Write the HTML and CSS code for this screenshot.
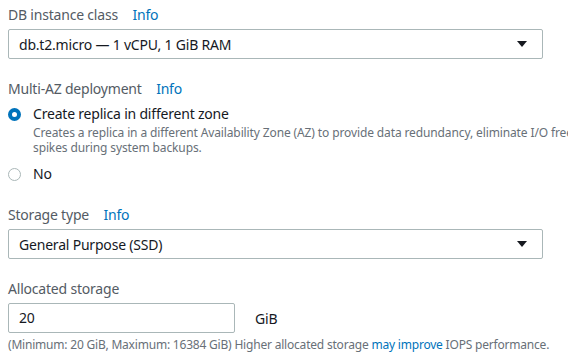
FILE: index.html
```html
<!DOCTYPE html>
<html lang="en">
<head>
  <meta charset="UTF-8">
  <title>Instance settings</title>
  <link rel="stylesheet" href="styles.css">
</head>
<body>
  <div class="form">
    <div class="field">
      <div class="label">DB instance class <a class="info" href="#">Info</a></div>
      <div class="select">
        <span>db.t2.micro — 1 vCPU, 1 GiB RAM</span>
        <span class="caret"></span>
      </div>
    </div>

    <div class="field">
      <div class="label">Multi-AZ deployment <a class="info" href="#">Info</a></div>
      <div class="radio-group">
        <div class="radio-item">
          <span class="radio checked"></span>
          <div>
            <div class="radio-label">Create replica in different zone</div>
            <div class="radio-desc">Creates a replica in a different Availability Zone (AZ) to provide data redundancy, eliminate I/O freeze<br>spikes during system backups.</div>
          </div>
        </div>
        <div class="radio-item">
          <span class="radio"></span>
          <div class="radio-label">No</div>
        </div>
      </div>
    </div>

    <div class="field">
      <div class="label">Storage type <a class="info" href="#">Info</a></div>
      <div class="select">
        <span>General Purpose (SSD)</span>
        <span class="caret"></span>
      </div>
    </div>

    <div class="field">
      <div class="label">Allocated storage</div>
      <div class="input-row">
        <div class="input">20</div>
        <span class="unit">GiB</span>
      </div>
      <div class="hint">(Minimum: 20 GiB, Maximum: 16384 GiB) Higher allocated storage <a href="#">may improve</a> IOPS performance.</div>
    </div>
  </div>
</body>
</html>
```

FILE: styles.css
```css
body {
  margin: 0;
  padding: 4px 8px;
  font-family: 'Noto Sans', sans-serif;
  font-size: 14px;
  letter-spacing: -0.2px;
  color: #16191f;
  background: #fff;
  overflow: hidden;
}

a {
  color: #0073bb;
  text-decoration: none;
}

.form {
  width: 535px;
  display: flex;
  flex-direction: column;
  gap: 19px;
}

.label {
  line-height: 22px;
  color: #545b64;
  margin-bottom: 3px;
}

.info {
  margin-left: 11px;
}

.select {
  height: 28px;
  border: 1px solid #aab7b8;
  border-radius: 2px;
  display: flex;
  align-items: center;
  justify-content: space-between;
  padding: 0 15px 0 10px;
}

.caret {
  width: 0;
  height: 0;
  border-left: 5px solid transparent;
  border-right: 5px solid transparent;
  border-top: 6px solid #16191f;
}

.radio-group {
  display: flex;
  flex-direction: column;
  gap: 8px;
}

.radio-item {
  display: flex;
  align-items: flex-start;
  gap: 12px;
}

.radio {
  width: 11px;
  height: 11px;
  margin-top: 5px;
  border: 1px solid #aab7b8;
  border-radius: 50%;
  flex-shrink: 0;
}

.radio.checked {
  width: 5px;
  height: 5px;
  border: 4px solid #0073bb;
  background: #fff;
}

.radio-label {
  line-height: 22px;
}

.radio-desc {
  font-size: 12px;
  line-height: 15px;
  letter-spacing: -0.12px;
  color: #687078;
  white-space: nowrap;
}

.input-row {
  display: flex;
  align-items: center;
  gap: 20px;
}

.input {
  width: 215px;
  height: 28px;
  line-height: 28px;
  border: 1px solid #aab7b8;
  border-radius: 2px;
  padding-left: 10px;
}

.hint {
  font-size: 12px;
  line-height: 16px;
  color: #687078;
  margin-top: 4px;
  white-space: nowrap;
}
```
